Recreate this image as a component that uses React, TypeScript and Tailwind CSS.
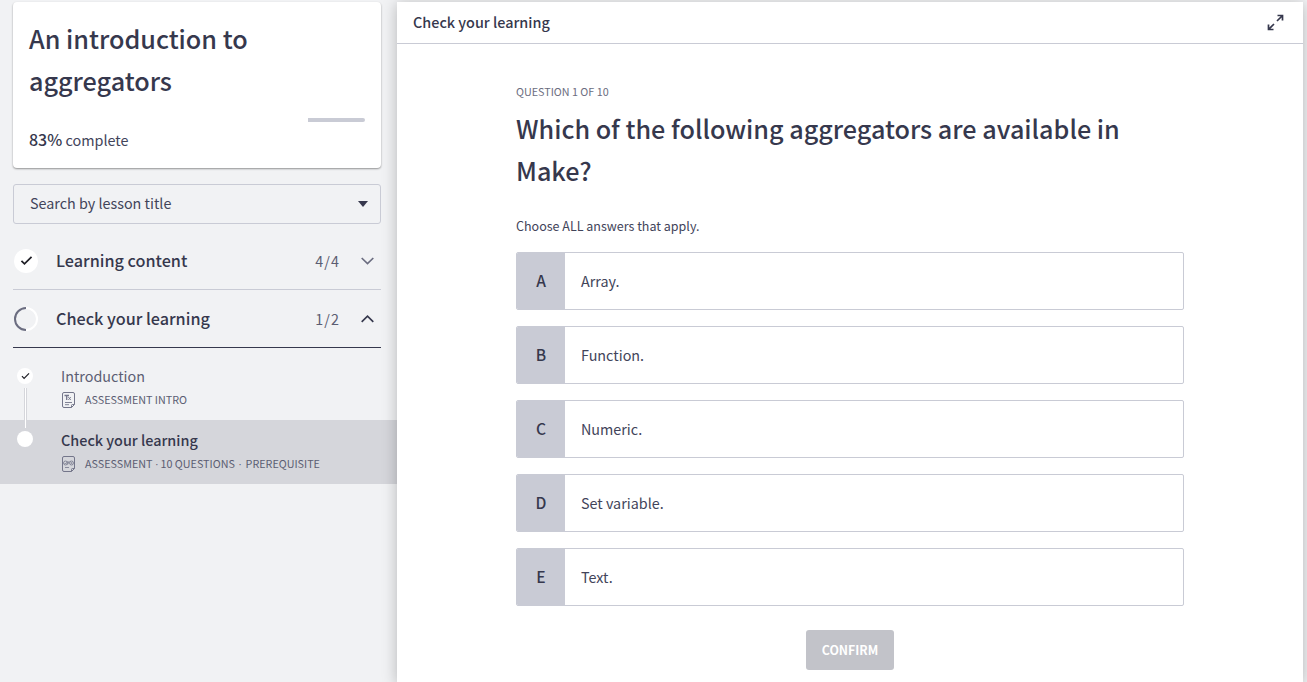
import React from "react";

const answers = [
  { key: "A", text: "Array." },
  { key: "B", text: "Function." },
  { key: "C", text: "Numeric." },
  { key: "D", text: "Set variable." },
  { key: "E", text: "Text." },
];

function Check({ className }: { className: string }) {
  return (
    <svg className={className} viewBox="0 0 14 12" fill="none" stroke="#1f1f26" strokeWidth="1.9">
      <path d="M1.5 6.3 L4.8 9.6 L12.5 2" />
    </svg>
  );
}

function Section({ title, count, open, children }: { title: string; count: string; open?: boolean; children: React.ReactNode }) {
  return (
    <div className={open ? "mr-4 ml-[13px] flex h-[58px] items-center border-b border-[#36384d] pr-[7px] pl-px" : "mr-4 ml-[13px] flex h-[58px] items-center border-b border-[#c9cbd5] pr-[7px] pl-px"}>
      {children}
      <span className="mb-px ml-[18px] flex-1 text-[16.2px] leading-6 font-medium text-[#36384d]">{title}</span>
      <span className="mr-[21px] text-[14.3px] leading-6 tracking-[1.1px] text-[#5b5d72]">{count}</span>
      <svg className="h-[8px] w-[13px]" viewBox="0 0 13 8" fill="none" stroke={open ? "#36384d" : "#6b6d80"} strokeWidth="1.7">
        <path d={open ? "M0.7 6.8 L6.5 1.2 L12.3 6.8" : "M0.7 1 L6.5 6.6 L12.3 1"} />
      </svg>
    </div>
  );
}

function PageIcon({ quiz }: { quiz?: boolean }) {
  return (
    <svg className="ml-px h-4 w-[14px]" viewBox="0 0 14 16" fill="none" stroke="#74768a" strokeWidth="1">
      <path d="M9.5 15.5 H2 Q0.5 15.5 0.5 14 V2 Q0.5 0.5 2 0.5 H11 Q12.5 0.5 12.5 2 V12.5 L9.5 15.5 V13.5 Q9.5 12.5 10.5 12.5 H12.5" />
      {quiz ? (
        <g strokeWidth="0.8">
          <circle cx="3.5" cy="7" r="2" />
          <circle cx="9.5" cy="7" r="2" />
          <path d="M2.6 7 L3.5 8 L6 5.2 M5.6 8.6 L7.2 5.2 M8.6 6.2 L10.4 7.9 M10.4 6.2 L8.6 7.9 M3 11.5 H7" />
        </g>
      ) : (
        <g>
          <path d="M2.5 3.5 H7 M4.7 3.5 V8" strokeWidth="1.3" />
          <path d="M6.3 5 L8.8 8 M8.8 5 L6.3 8 M3 10.5 H10 M3 12.7 H7" strokeWidth="0.9" />
        </g>
      )}
    </svg>
  );
}

export default function App() {
  return (
    <div className="flex h-[682px] w-[1307px] overflow-hidden bg-[#f1f2f4] font-['Noto_Sans_CJK_SC',sans-serif] text-[#36384d]">
      <aside className="flex w-[397px] shrink-0 flex-col">
        <div className="mr-4 ml-[13px] mt-[2px] h-[166px] rounded-[4px] bg-white px-4 pt-[15px] shadow-[0_1px_2px_rgba(0,0,0,0.4)]">
          <h1 className="text-[25.18px] leading-[42px] font-medium">An introduction to aggregators</h1>
          <div className="mt-[17px] flex h-1 justify-end overflow-hidden rounded-full">
            <div className="w-[57px] bg-[#c9cbd5]" />
          </div>
          <p className="mt-[5px] text-[14.4px] leading-6">
            <span className="text-[16px] font-medium">83%</span> <span className="text-[#42445a]">complete</span>
          </p>
        </div>
        <div className="mr-4 ml-[13px] mt-4 flex h-10 items-center justify-between rounded-[3px] border border-[#c9cbd5] pr-3 pl-4">
          <span className="mb-[2px] text-[14.35px] leading-6 text-[#42445a]">Search by lesson title</span>
          <svg className="h-[6px] w-[10px]" viewBox="0 0 10 6">
            <path d="M0 0 H10 L5 6 Z" fill="#36384d" />
          </svg>
        </div>
        <div className="mt-2">
          <Section title="Learning content" count="4/4">
            <span className="flex size-6 items-center justify-center rounded-full bg-white">
              <Check className="h-[11px] w-[13px]" />
            </span>
          </Section>
          <Section title="Check your learning" count="1/2" open>
            <svg className="size-6" viewBox="0 0 24 24" fill="none" strokeWidth="2">
              <path d="M12 1 A11 11 0 0 1 12 23" stroke="#ffffff" />
              <path d="M12 1 A11 11 0 0 0 12 23" stroke="#6b6d80" />
            </svg>
          </Section>
        </div>
        <div className="flex h-[72px] pl-[17px]">
          <div className="flex w-4 flex-col items-center pt-5">
            <span className="flex size-4 shrink-0 items-center justify-center rounded-full bg-white">
              <Check className="h-[8px] w-[9px]" />
            </span>
            <span className="z-10 mt-1 h-10 w-[3px] shrink-0 border-x border-[#d5d6db] bg-white" />
          </div>
          <div className="ml-7 pt-4">
            <p className="text-[14.35px] leading-6 text-[#5b5d72]">Introduction</p>
            <div className="flex h-6 items-center gap-[9px]">
              <PageIcon />
              <span className="text-[10.75px] leading-4 text-[#5b5d72]">ASSESSMENT INTRO</span>
            </div>
          </div>
        </div>
        <div className="flex h-16 bg-[#d5d6db] pl-[17px]">
          <span className="mt-[11px] size-4 rounded-full bg-white" />
          <div className="ml-7 pt-2">
            <p className="text-[14.4px] leading-6 font-medium">Check your learning</p>
            <div className="flex h-6 items-center gap-[9px]">
              <PageIcon quiz />
              <span className="text-[10.75px] leading-4 text-[#5b5d72]">
                ASSESSMENT<span className="font-['Liberation_Sans',sans-serif] tracking-[-0.5px]"> · </span>10 QUESTIONS
                <span className="font-['Liberation_Sans',sans-serif] tracking-[0.4px]"> · </span>PREREQUISITE
              </span>
            </div>
          </div>
        </div>
      </aside>
      <main className="relative mt-[2px] flex w-[906px] flex-col bg-white shadow-[0_2px_14px_rgba(0,0,0,0.25)]">
        <header className="flex h-[42px] items-center justify-between border-b border-[#c9cbd5] px-4">
          <span className="mb-[2px] text-[14.4px] leading-6 font-medium">Check your learning</span>
          <svg className="mr-[3px] mb-px size-[17px]" viewBox="0 0 17 17" fill="none" stroke="#36384d" strokeWidth="1.7">
            <path d="M10.5 1.5 H15.5 V6.5 M15.5 1.5 L10 7 M1.5 10.5 V15.5 H6.5 M1.5 15.5 L7 10" />
          </svg>
        </header>
        <section className="mx-auto flex w-[668px] flex-1 flex-col pt-10">
          <p className="text-[10.75px] leading-4 text-[#6b6d80]">QUESTION 1 OF 10</p>
          <h2 className="mt-[7px] text-[25.18px] leading-[42px] font-medium">Which of the following aggregators are available in Make?</h2>
          <p className="mt-[25px] text-[12.5px] leading-5 text-[#42445a]">Choose ALL answers that apply.</p>
          <div className="mt-4 flex flex-col gap-4">
            {answers.map((a) => (
              <div key={a.key} className="flex h-[58px] overflow-hidden rounded-[2px] border border-[#c9cbd5]">
                <span className="flex w-12 items-center justify-center bg-[#c9cbd5] text-[15.6px] font-medium">{a.key}</span>
                <span className="flex items-center pl-4 text-[14.35px] text-[#42445a]">{a.text}</span>
              </div>
            ))}
          </div>
          <button className="mt-6 h-10 w-[88px] self-center rounded-[3px] bg-[#c2c3c9] text-[12.3px] font-bold text-white">CONFIRM</button>
        </section>
      </main>
    </div>
  );
}
